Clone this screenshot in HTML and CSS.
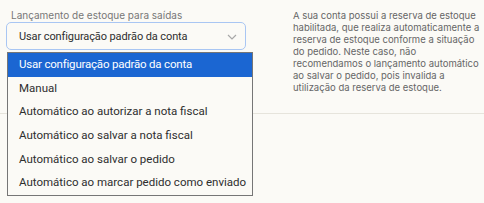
FILE: index.html
```html
<!DOCTYPE html>
<html lang="pt-BR">

<head>
    <meta charset="UTF-8">
    <meta name="viewport" content="width=device-width, initial-scale=1.0">
    <title>Estoque</title>
    <link rel="stylesheet" href="styles.css">
</head>

<body>
    <div class="row">
        <div class="field">
            <label class="label">Lançamento de estoque para saídas</label>
            <div class="select">
                <span>Usar configuração padrão da conta</span>
                <svg class="chevron" width="10" height="6" viewBox="0 0 10 6">
                    <path d="M1 1l4 4 4-4" fill="none" stroke="#a8a8a8" stroke-width="1.2"/>
                </svg>
            </div>
            <ul class="options">
                <li class="selected">Usar configuração padrão da conta</li>
                <li>Manual</li>
                <li>Automático ao autorizar a nota fiscal</li>
                <li>Automático ao salvar a nota fiscal</li>
                <li>Automático ao salvar o pedido</li>
                <li>Automático ao marcar pedido como enviado</li>
            </ul>
        </div>
        <p class="help">A sua conta possui a reserva de estoque habilitada, que realiza automaticamente a reserva de estoque conforme a situação do pedido. Neste caso, não recomendamos o lançamento automático ao salvar o pedido, pois invalida a utilização da reserva de estoque.</p>
    </div>
</body>

</html>
```

FILE: styles.css
```css
html, body {
    min-height: 100%;
}
body {
    margin: 0;
    min-height: 203px;
    background-color: #fbfaf6;
    font-family: 'Inter', 'Noto Sans', sans-serif;
    color: #333;
}
.row {
    display: flex;
    padding: 9px 0 19px 0;
    border-bottom: 1px solid #e6e4dc;
}
.field {
    position: relative;
    width: 240px;
    margin-left: 6px;
}
.label {
    display: block;
    font-size: 10px;
    color: #777;
    margin-left: 5px;
    height: 13px;
    line-height: 12px;
}
.select {
    height: 26px;
    border: 1px solid #a9c6f3;
    border-radius: 5px;
    display: flex;
    align-items: center;
    justify-content: space-between;
    padding: 0 8px 0 12px;
    font-family: 'Roboto', sans-serif;
    font-size: 11px;
    color: #2e2e2e;
    letter-spacing: -0.1px;
}
.chevron {
    margin-top: 1px;
}
.options {
    position: absolute;
    z-index: 5;
    top: 43px;
    left: 1px;
    width: 244px;
    margin: 0;
    padding: 0;
    list-style: none;
    background-color: #fbfaf6;
    border: 1px solid #767676;
}
.options li {
    height: 23.7px;
    line-height: 23.7px;
    padding-left: 11px;
    font-family: 'Roboto', sans-serif;
    font-size: 11.5px;
    color: #2e2e2e;
    letter-spacing: 0;
    white-space: nowrap;
}
.options .selected {
    background-color: #1b66d2;
    color: #fff;
    letter-spacing: -0.2px;
}
.help {
    width: 188px;
    margin: 1px 0 0 47px;
    font-size: 9.5px;
    line-height: 12px;
    color: #666;
}
```
